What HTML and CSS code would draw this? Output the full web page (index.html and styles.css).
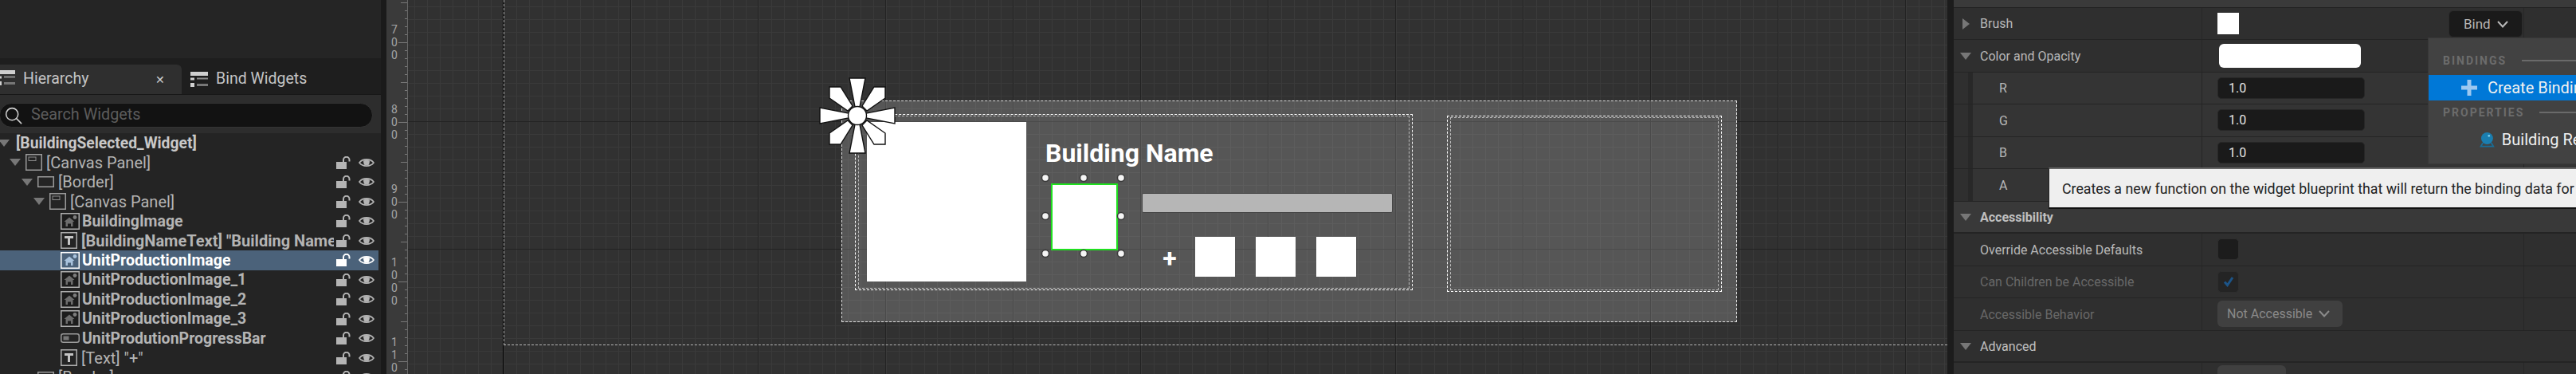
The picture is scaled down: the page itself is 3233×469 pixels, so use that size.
FILE: index.html
```html
<!DOCTYPE html>
<html lang="en">

<head>
    <meta charset="UTF-8">
    <title>BuildingSelected_Widget</title>
    <link rel="stylesheet" href="styles.css">
</head>

<body>
    <svg class="defs" width="0" height="0">
        <symbol id="lock" viewBox="0 0 18 16">
            <rect x="0" y="7" width="13" height="9" fill="currentColor"/>
            <path d="M9 7V4.5a3.7 3.7 0 0 1 7.5 0V6.5" fill="none" stroke="currentColor" stroke-width="2"/>
        </symbol>
        <symbol id="eye" viewBox="0 0 20 14">
            <path d="M1 7C5 1.5 15 1.5 19 7C15 12.5 5 12.5 1 7Z" fill="none" stroke="currentColor" stroke-width="1.6"/>
            <path d="M5.5 4.6C8 2.8 13 2.8 14.5 5A4.6 4.6 0 0 1 5.5 4.6Z" fill="currentColor" opacity=".75"/>
            <circle cx="10" cy="7" r="3.6" fill="currentColor"/>
        </symbol>
        <symbol id="image" viewBox="0 0 24 21">
            <rect x=".75" y=".75" width="22.5" height="19.5" fill="#1c1c1c" stroke="#adadad" stroke-width="1.5"/>
            <circle cx="18" cy="5.5" r="2.4" fill="#7d7d7d"/>
            <path d="M4.5 11L11 5.5L17.5 11H15.5V17H13V13.5H9V17H6.5V11Z" fill="#6d6d6d"/>
        </symbol>
        <symbol id="image-sel" viewBox="0 0 24 21">
            <rect x=".75" y=".75" width="22.5" height="19.5" fill="#4b627a" stroke="#fff" stroke-width="1.5"/>
            <circle cx="18" cy="5.5" r="2.4" fill="#a9c3dd"/>
            <path d="M4.5 11L11 5.5L17.5 11H15.5V17H13V13.5H9V17H6.5V11Z" fill="#a9c3dd"/>
        </symbol>
        <symbol id="text" viewBox="0 0 21 21">
            <rect x=".75" y=".75" width="19.5" height="19.5" fill="none" stroke="#adadad" stroke-width="1.5"/>
            <path d="M5 5H16V8H12V16H9V8H5Z" fill="#c4c4c4"/>
        </symbol>
        <symbol id="panel" viewBox="0 0 21 21">
            <rect x=".75" y=".75" width="19.5" height="19.5" fill="none" stroke="#9a9a9a" stroke-width="1.5"/>
            <rect x="4" y="4" width="9" height="4.5" fill="none" stroke="#8a8a8a"/>
        </symbol>
        <symbol id="border" viewBox="0 0 21 14">
            <rect x=".75" y=".75" width="19.5" height="12.5" fill="none" stroke="#9a9a9a" stroke-width="1.5"/>
        </symbol>
        <symbol id="bar" viewBox="0 0 24 12">
            <rect x=".75" y=".75" width="22.5" height="10.5" rx="2.5" fill="none" stroke="#9a9a9a" stroke-width="1.5"/>
            <rect x="3.5" y="3.5" width="7" height="5" fill="#777"/>
        </symbol>
        <symbol id="list" viewBox="0 0 22 19">
            <rect x="0" y="0" width="22" height="5" fill="#d0d0d0"/>
            <rect x="0" y="7.5" width="5" height="3" fill="#d0d0d0"/>
            <rect x="8" y="7.5" width="14" height="2" fill="#8c8c8c"/>
            <rect x="0" y="14" width="5" height="5" fill="#d0d0d0"/>
            <rect x="8" y="15" width="14" height="3" fill="#777"/>
        </symbol>
        <symbol id="chevron" viewBox="0 0 14 9">
            <path d="M1 1L7 7.5L13 1" fill="none" stroke="currentColor" stroke-width="2"/>
        </symbol>
    </svg>

    <div class="editor">
        <div class="left-panel">
            <div class="left-top"></div>
            <div class="tabs">
                <div class="tab tab-active">
                    <svg class="tab-icon tab-icon-cut"><use href="#list"/></svg>
                    <span class="tab-label">Hierarchy</span>
                    <span class="tab-close">&#10005;</span>
                </div>
                <div class="tab tab-idle">
                    <svg class="tab-icon"><use href="#list"/></svg>
                    <span class="tab-label">Bind Widgets</span>
                </div>
            </div>
            <div class="search-row">
                <div class="search-box">
                    <svg class="search-icon" viewBox="0 0 24 24">
                        <circle cx="10" cy="10" r="8.2" fill="none" stroke="#cfcfcf" stroke-width="1.7"/>
                        <path d="M16 16L23 23" stroke="#cfcfcf" stroke-width="1.7"/>
                    </svg>
                    <span class="search-text">Search Widgets</span>
                </div>
            </div>
            <div class="tree">
                <div class="tree-row level-0">
                    <i class="arrow-down"></i>
                    <span class="tree-label bold root-label">[BuildingSelected_Widget]</span>
                </div>
                <div class="tree-row level-1">
                    <i class="arrow-down"></i>
                    <svg class="tree-icon icon-square"><use href="#panel"/></svg>
                    <span class="tree-label">[Canvas Panel]</span>
                    <svg class="lock"><use href="#lock"/></svg>
                    <svg class="eye"><use href="#eye"/></svg>
                </div>
                <div class="tree-row level-2">
                    <i class="arrow-down"></i>
                    <svg class="tree-icon icon-flat"><use href="#border"/></svg>
                    <span class="tree-label">[Border]</span>
                    <svg class="lock"><use href="#lock"/></svg>
                    <svg class="eye"><use href="#eye"/></svg>
                </div>
                <div class="tree-row level-3">
                    <i class="arrow-down"></i>
                    <svg class="tree-icon icon-square"><use href="#panel"/></svg>
                    <span class="tree-label">[Canvas Panel]</span>
                    <svg class="lock"><use href="#lock"/></svg>
                    <svg class="eye"><use href="#eye"/></svg>
                </div>
                <div class="tree-row level-4">
                    <svg class="tree-icon icon-wide"><use href="#image"/></svg>
                    <span class="tree-label bold">BuildingImage</span>
                    <svg class="lock"><use href="#lock"/></svg>
                    <svg class="eye"><use href="#eye"/></svg>
                </div>
                <div class="tree-row level-4">
                    <svg class="tree-icon icon-square"><use href="#text"/></svg>
                    <span class="tree-label bold name-label">[BuildingNameText] "Building Name"</span>
                    <svg class="lock"><use href="#lock"/></svg>
                    <svg class="eye"><use href="#eye"/></svg>
                </div>
                <div class="tree-row level-4 selected">
                    <svg class="tree-icon icon-wide"><use href="#image-sel"/></svg>
                    <span class="tree-label bold">UnitProductionImage</span>
                    <svg class="lock"><use href="#lock"/></svg>
                    <svg class="eye"><use href="#eye"/></svg>
                </div>
                <div class="tree-row level-4">
                    <svg class="tree-icon icon-wide"><use href="#image"/></svg>
                    <span class="tree-label bold">UnitProductionImage_1</span>
                    <svg class="lock"><use href="#lock"/></svg>
                    <svg class="eye"><use href="#eye"/></svg>
                </div>
                <div class="tree-row level-4">
                    <svg class="tree-icon icon-wide"><use href="#image"/></svg>
                    <span class="tree-label bold">UnitProductionImage_2</span>
                    <svg class="lock"><use href="#lock"/></svg>
                    <svg class="eye"><use href="#eye"/></svg>
                </div>
                <div class="tree-row level-4">
                    <svg class="tree-icon icon-wide"><use href="#image"/></svg>
                    <span class="tree-label bold">UnitProductionImage_3</span>
                    <svg class="lock"><use href="#lock"/></svg>
                    <svg class="eye"><use href="#eye"/></svg>
                </div>
                <div class="tree-row level-4">
                    <svg class="tree-icon icon-bar"><use href="#bar"/></svg>
                    <span class="tree-label bold">UnitProdutionProgressBar</span>
                    <svg class="lock"><use href="#lock"/></svg>
                    <svg class="eye"><use href="#eye"/></svg>
                </div>
                <div class="tree-row level-4">
                    <svg class="tree-icon icon-square"><use href="#text"/></svg>
                    <span class="tree-label">[Text] "+"</span>
                    <svg class="lock"><use href="#lock"/></svg>
                    <svg class="eye"><use href="#eye"/></svg>
                </div>
                <div class="tree-row level-2">
                    <i class="arrow-down"></i>
                    <svg class="tree-icon icon-flat"><use href="#border"/></svg>
                    <span class="tree-label">[Border]</span>
                    <svg class="lock"><use href="#lock"/></svg>
                    <svg class="eye"><use href="#eye"/></svg>
                </div>
            </div>
        </div>

        <div class="gutter-left"></div>

        <div class="ruler">
            <div class="ruler-seg"><span>700</span></div>
            <div class="ruler-seg"><span>800</span></div>
            <div class="ruler-seg"><span>900</span></div>
            <div class="ruler-seg"><span>1000</span></div>
            <div class="ruler-seg"><span>1100</span></div>
        </div>

        <div class="canvas">
            <div class="axis-line"></div>
            <div class="screen-bounds"></div>

            <div class="widget">
                <div class="slot slot-main"><div class="slot-inner"></div></div>
                <div class="slot slot-side"><div class="slot-inner"></div></div>
                <div class="building-image"></div>
                <div class="building-name">Building Name</div>
                <div class="unit-selected"></div>
                <svg class="handles" viewBox="0 0 110 110">
                    <circle cx="7" cy="7" r="4.5"/><circle cx="55" cy="7" r="4.5"/><circle cx="102" cy="7" r="4.5"/>
                    <circle cx="7" cy="55" r="4.5"/><circle cx="102" cy="55" r="4.5"/>
                    <circle cx="7" cy="102" r="4.5"/><circle cx="55" cy="102" r="4.5"/><circle cx="102" cy="102" r="4.5"/>
                </svg>
                <div class="progress"></div>
                <div class="plus">+</div>
                <div class="queue">
                    <div class="queue-item"></div>
                    <div class="queue-item"></div>
                    <div class="queue-item"></div>
                </div>
            </div>

            <svg class="anchor" viewBox="-50 -50 100 100">
                <g fill="#fff" stroke="#111" stroke-width="1.4" stroke-linejoin="miter">
                    <path d="M-10 -47H10L3 -11H-3Z"/>
                    <path d="M-10 47H10L3 11H-3Z"/>
                    <path d="M-47 -10V10L-11 3V-3Z"/>
                    <path d="M47 -10V10L11 3V-3Z"/>
                    <path d="M-35 -36H-21L-6 -12L-12 -6L-35 -22Z"/>
                    <path d="M35 -36H21L6 -12L12 -6L35 -22Z"/>
                    <path d="M-35 36H-21L-6 12L-12 6L-35 22Z"/>
                    <path d="M35 36H21L6 12L12 6L35 22Z"/>
                    <circle cx="0" cy="0" r="11.5"/>
                </g>
            </svg>
        </div>

        <div class="gutter-right"></div>

        <div class="details">
            <div class="details-top"></div>

            <div class="prop">
                <div class="prop-name"><i class="arrow-right"></i><span>Brush</span></div>
                <div class="prop-value"><div class="swatch"></div></div>
                <div class="prop-extra"></div>
            </div>
            <div class="prop">
                <div class="prop-name"><i class="arrow-down"></i><span>Color and Opacity</span></div>
                <div class="prop-value"><div class="color-bar"></div></div>
                <div class="prop-extra"></div>
            </div>
            <div class="prop prop-sub">
                <div class="prop-name"><span>R</span></div>
                <div class="prop-value"><div class="num-input">1.0</div></div>
                <div class="prop-extra"></div>
            </div>
            <div class="prop prop-sub">
                <div class="prop-name"><span>G</span></div>
                <div class="prop-value"><div class="num-input">1.0</div></div>
                <div class="prop-extra"></div>
            </div>
            <div class="prop prop-sub">
                <div class="prop-name"><span>B</span></div>
                <div class="prop-value"><div class="num-input">1.0</div></div>
                <div class="prop-extra"></div>
            </div>
            <div class="prop prop-sub">
                <div class="prop-name"><span>A</span></div>
                <div class="prop-value"></div>
                <div class="prop-extra"></div>
            </div>

            <div class="section section-main"><i class="arrow-down"></i><span>Accessibility</span></div>
            <div class="prop">
                <div class="prop-name"><span>Override Accessible Defaults</span></div>
                <div class="prop-value"><div class="check"></div></div>
                <div class="prop-extra"></div>
            </div>
            <div class="prop dim">
                <div class="prop-name"><span>Can Children be Accessible</span></div>
                <div class="prop-value">
                    <div class="check check-on">
                        <svg viewBox="0 0 14 14"><path d="M2 7.5L5.5 11.5L12 2" fill="none" stroke="#1c5488" stroke-width="3"/></svg>
                    </div>
                </div>
                <div class="prop-extra"></div>
            </div>
            <div class="prop dim">
                <div class="prop-name"><span>Accessible Behavior</span></div>
                <div class="prop-value">
                    <div class="combo"><span>Not Accessible</span><svg class="chev-small"><use href="#chevron"/></svg></div>
                </div>
                <div class="prop-extra"></div>
            </div>
            <div class="section"><i class="arrow-down"></i><span>Advanced</span></div>
            <div class="prop dim">
                <div class="prop-name"><span>Accessible Summary Behavior</span></div>
                <div class="prop-value"><div class="combo combo-short"></div></div>
                <div class="prop-extra"></div>
            </div>

            <div class="bind-btn"><span>Bind</span><svg class="chev-bind"><use href="#chevron"/></svg></div>

            <div class="bind-menu">
                <div class="menu-heading"><span>BINDINGS</span><i></i></div>
                <div class="menu-item menu-active">
                    <svg class="menu-plus" viewBox="0 0 20 20"><path d="M7.5 0H12.5V7.5H20V12.5H12.5V20H7.5V12.5H0V7.5H7.5Z" fill="#9cc8f0"/></svg>
                    <span>Create Binding</span>
                </div>
                <div class="menu-heading"><span>PROPERTIES</span><i></i></div>
                <div class="menu-item menu-prop">
                    <svg class="menu-ref" viewBox="0 0 24 24">
                        <path d="M0 24L4 17H6.5L4 22H20L17.500 17H20L24 24Z" fill="#1a6d96"/>
                        <circle cx="12" cy="10" r="9.500" fill="#1a7eb0"/>
                        <circle cx="15" cy="6" r="1.700" fill="#7fd0f0"/>
                    </svg>
                    <span>Building Reference</span>
                </div>
            </div>

            <div class="tooltip">Creates a new function on the widget blueprint that will return the binding data for this property.</div>
        </div>
    </div>
</body>

</html>
```

FILE: styles.css
```css
html, body {
    margin: 0;
    height: 100%;
    overflow: hidden;
    background-color: #1a1a1a;
    font-family: Roboto, "Liberation Sans", sans-serif;
}

.defs {
    position: absolute;
}

.editor {
    display: flex;
    width: 3233px;
    height: 469px;
    overflow: hidden;
}

/* left panel */
.left-panel {
    width: 478px;
    flex: none;
    display: flex;
    flex-direction: column;
    background-color: #242424;
}

.left-top {
    height: 73px;
    background-color: #252525;
}

.tabs {
    display: flex;
    height: 46px;
    padding-top: 8px;
    box-sizing: border-box;
    background-color: #1e1e1e;
    border-bottom: 1px solid #181818;
}

.tab {
    display: flex;
    align-items: center;
    font-size: 19.5px;
    color: #c4c4c4;
}

.tab-label {
    margin-top: -2px;
}

.tab-active {
    width: 228px;
    box-sizing: border-box;
    padding-left: 29px;
    position: relative;
    background-color: #2f2f2f;
    border-top-right-radius: 6px;
}

.tab-idle {
    padding-left: 11px;
}

.tab-icon {
    width: 22px;
    height: 19px;
    margin-right: 10px;
}

.tab-icon-cut {
    position: absolute;
    left: -3px;
    top: 7px;
    margin: 0;
}

.tab-close {
    position: absolute;
    left: 195px;
    font-size: 14px;
    color: #d0d0d0;
}

.search-row {
    height: 48px;
    box-sizing: border-box;
    padding: 10px 10px 7px 0;
    background-color: #2d2d2d;
}

.search-box {
    display: flex;
    align-items: center;
    height: 31px;
    box-sizing: border-box;
    margin-left: -1px;
    padding-left: 6px;
    background-color: #121212;
    border: 1px solid #333;
    border-radius: 16px;
    font-size: 19.8px;
    color: #5c5c5c;
}

.search-text {
    margin-top: -3px;
}

.search-icon {
    width: 22px;
    height: 22px;
    margin-right: 11px;
}

.tree {
    flex: 1;
    margin-right: 3px;
    overflow: hidden;
    background-color: #242424;
}

.tree-row {
    display: flex;
    align-items: center;
    height: 24.5px;
    font-size: 20px;
    color: #b4b4b4;
    padding-right: 5px;
}

.level-1 { padding-left: 12px; }
.level-2 { padding-left: 27px; }
.level-3 { padding-left: 42px; }
.level-4 { padding-left: 76px; }

.tree-row > .arrow-down {
    margin: 0 6px 0 0;
}

.tree-row.level-0 > .arrow-down {
    margin-left: -2px;
    margin-right: 8px;
}

.tree-icon {
    flex: none;
    margin-right: 5px;
}

.icon-square { width: 21px; height: 21px; }
.icon-flat { width: 21px; height: 14px; }
.icon-wide { width: 24px; height: 21px; margin-right: 3px; }
.icon-bar { width: 24px; height: 12px; margin-right: 3px; }

.tree-label {
    flex: 1;
    overflow: hidden;
    white-space: nowrap;
    margin-right: 3px;
}

.bold {
    font-size: 19.5px;
    font-weight: 700;
}

.root-label {
    font-size: 19.3px;
    color: #c8c8c8;
}

.name-label {
    font-size: 20px;
}

.lock {
    flex: none;
    width: 18px;
    height: 16px;
    margin-right: 10px;
    color: #b4b4b4;
}

.eye {
    flex: none;
    width: 20px;
    height: 14px;
    color: #b4b4b4;
}

.selected {
    background-color: #4b627a;
    color: #fff;
}

.selected .lock,
.selected .eye {
    color: #fff;
}

/* arrows */
.arrow-down {
    flex: none;
    width: 0;
    height: 0;
    border-left: 7px solid transparent;
    border-right: 7px solid transparent;
    border-top: 9px solid #777;
}

.arrow-right {
    flex: none;
    width: 0;
    height: 0;
    border-top: 7px solid transparent;
    border-bottom: 7px solid transparent;
    border-left: 9px solid #777;
}

.gutter-left {
    width: 7px;
    flex: none;
    background-color: #1a1a1a;
}

/* ruler */
.ruler {
    width: 27px;
    flex: none;
    box-sizing: border-box;
    padding-top: 3px;
    overflow: hidden;
    border-right: 1px solid #666;
    background-color: #3a3a3a;
    background-image:
        linear-gradient(#787878 1px, transparent 1px),
        linear-gradient(#787878 1px, transparent 1px),
        linear-gradient(#787878 1px, transparent 1px);
    background-repeat: repeat-y;
    background-position: right 0 top 53px, right 0 top 3px, right 0 top 3px;
    background-size: 11px 100px, 8px 100px, 3px 10px;
}

.ruler-seg {
    height: 100px;
    display: flex;
    align-items: center;
    padding-left: 5px;
}

.ruler-seg span {
    width: 10px;
    word-break: break-all;
    text-align: center;
    font-size: 14px;
    line-height: 16px;
    color: #a6a6a6;
}

/* designer canvas */
.canvas {
    flex: 1;
    position: relative;
    overflow: hidden;
    background-color: #313131;
    background-image:
        linear-gradient(to right, #232323 1px, transparent 1px),
        linear-gradient(to bottom, #232323 1px, transparent 1px),
        linear-gradient(to right, #3a3a3a 1px, transparent 1px),
        linear-gradient(to bottom, #3a3a3a 1px, transparent 1px);
    background-size: 160px 100%, 100% 160px, 16px 100%, 100% 16px;
    background-position: 119px 0, 0 152px, 8px 0, 0 8px;
}

.axis-line {
    position: absolute;
    left: 119px;
    top: 0;
    bottom: 0;
    width: 1px;
    background-color: #000;
}

.screen-bounds {
    position: absolute;
    left: 120px;
    top: -5px;
    right: 0;
    height: 437px;
    border-left: 1px dashed #b5b5b5;
    border-bottom: 1px dashed #b5b5b5;
}

.widget {
    position: absolute;
    left: 544px;
    top: 126px;
    width: 1122px;
    height: 276px;
    border: 1px dashed #dcdcdc;
    background-color: rgba(255, 255, 255, 0.18);
}

.slot {
    position: absolute;
    box-sizing: border-box;
    height: 221px;
    border: 1px dashed #fff;
    padding: 1px 3px;
}

.slot-main {
    left: 16px;
    top: 16px;
    width: 700px;
}

.slot-side {
    left: 759px;
    top: 18px;
    width: 345px;
}

.slot-inner {
    height: 100%;
    box-sizing: border-box;
    border: 1px dashed #333;
    outline: 1px dashed #bbb;
    outline-offset: -1px;
}

.building-image {
    position: absolute;
    left: 31px;
    top: 26px;
    width: 200px;
    height: 200px;
    background-color: #fff;
}

.building-name {
    position: absolute;
    left: 255px;
    top: 45px;
    font-size: 32px;
    line-height: 40px;
    font-weight: 700;
    color: #fff;
    white-space: nowrap;
}

.unit-selected {
    position: absolute;
    left: 262px;
    top: 103px;
    width: 84px;
    height: 84px;
    box-sizing: border-box;
    border: 2px solid #1fe01f;
    background-color: #fff;
}

.handles {
    position: absolute;
    left: 248px;
    top: 89px;
    width: 110px;
    height: 110px;
}

.handles circle {
    fill: #f4f4f4;
    stroke: #3a3a3a;
    stroke-width: 1.5;
}

.progress {
    position: absolute;
    left: 376px;
    top: 115px;
    width: 315px;
    height: 25px;
    box-sizing: border-box;
    border: 1px solid #444;
    border-radius: 2px;
    background-color: #b6b6b6;
}

.plus {
    position: absolute;
    left: 400px;
    top: 177px;
    width: 22px;
    text-align: center;
    font-size: 32px;
    line-height: 40px;
    font-weight: 700;
    color: #fff;
}

.queue {
    position: absolute;
    left: 443px;
    top: 170px;
    display: flex;
    gap: 26px;
}

.queue-item {
    width: 50px;
    height: 50px;
    background-color: #fff;
}

.anchor {
    position: absolute;
    left: 514px;
    top: 95px;
    width: 100px;
    height: 100px;
}

.gutter-right {
    width: 8px;
    flex: none;
    background-color: #1c1c1c;
}

/* details panel */
.details {
    width: 781px;
    flex: none;
    position: relative;
    background-color: #2f2f2f;
    font-size: 16px;
    color: #b8b8b8;
}

.details-top {
    height: 9.5px;
    box-sizing: border-box;
    background-color: #3a3a3a;
    border-bottom: 1px solid #222;
}

.prop {
    display: flex;
    height: 40.5px;
    box-sizing: border-box;
    border-bottom: 1px solid #242424;
}

.prop-name {
    width: 312px;
    flex: none;
    box-sizing: border-box;
    display: flex;
    align-items: center;
    padding-left: 33px;
    padding-top: 1px;
    position: relative;
    border-right: 1px solid #262626;
}

.prop-name > i {
    position: absolute;
    left: 8px;
}

.prop-name > .arrow-right {
    left: 11px;
}

.prop-value {
    width: 404px;
    flex: none;
    box-sizing: border-box;
    display: flex;
    align-items: center;
    padding-left: 19px;
    border-right: 1px solid #262626;
}

.prop-extra {
    flex: 1;
}

.prop-sub {
    background-color: #343434;
    background-image: linear-gradient(to right, #2f2f2f 18px, #282828 18px, #282828 24px, transparent 24px);
}

.prop-sub .prop-name {
    padding-left: 57px;
}

.dim {
    color: #686868;
}

.swatch {
    width: 27px;
    height: 27px;
    background-color: #fff;
}

.color-bar {
    width: 178px;
    height: 30px;
    margin-left: 2px;
    border-radius: 6px;
    background-color: #fff;
}

.num-input {
    width: 185px;
    height: 27px;
    box-sizing: border-box;
    display: flex;
    align-items: center;
    padding-left: 13px;
    background-color: #1a1a1a;
    border: 1px solid #272727;
    border-radius: 5px;
    color: #e4e4e4;
}

.section {
    display: flex;
    align-items: center;
    height: 40.5px;
    box-sizing: border-box;
    padding-left: 8px;
    padding-top: 1px;
    background-color: #2f2f2f;
    border-bottom: 2px solid #242424;
    color: #c0c0c0;
}

.section span {
    margin-left: 11px;
}

.section-main {
    background-color: #393939;
    font-weight: 700;
}

.check {
    width: 27px;
    height: 27px;
    box-sizing: border-box;
    display: flex;
    align-items: center;
    justify-content: center;
    background-color: #1c1c1c;
    border: 1px solid #2e2e2e;
    border-radius: 5px;
}

.check-on {
    background-color: #242424;
}

.check svg {
    width: 14px;
    height: 14px;
}

.combo {
    display: flex;
    align-items: center;
    height: 33px;
    width: 157px;
    box-sizing: border-box;
    padding-left: 12px;
    border-radius: 6px;
    background-color: #404040;
    color: #8a8a8a;
}

.combo-short {
    width: 86px;
}

.chev-small {
    width: 14px;
    height: 9px;
    margin-left: 8px;
}

.bind-btn {
    position: absolute;
    left: 621px;
    top: 13px;
    width: 93px;
    height: 34px;
    box-sizing: border-box;
    display: flex;
    align-items: center;
    padding-left: 18px;
    background-color: #1a1a1a;
    border: 1px solid #2b2b2b;
    border-radius: 6px;
    font-size: 17px;
    color: #b8b8b8;
}

.chev-bind {
    width: 14px;
    height: 9px;
    margin-left: 8px;
}

.bind-menu {
    position: absolute;
    left: 595px;
    top: 47px;
    width: 260px;
    height: 159px;
    box-sizing: border-box;
    padding-top: 13px;
    background-color: #424242;
    border: 1px solid #383838;
}

.menu-heading {
    display: flex;
    align-items: center;
    height: 33px;
    box-sizing: border-box;
    padding: 0 0 3px 18px;
    font-size: 14px;
    font-weight: 700;
    letter-spacing: 2px;
    color: #6c6c6c;
}

.menu-heading i {
    flex: 1;
    height: 2px;
    margin-left: 19px;
    background-color: #6a6a6a;
}

.menu-item {
    display: flex;
    align-items: center;
    height: 32px;
    font-size: 20px;
    white-space: nowrap;
    color: #f0f0f0;
}

.menu-active {
    padding-left: 41px;
    background-color: #0078d7;
}

.menu-plus {
    width: 20px;
    height: 20px;
    margin-right: 13px;
}

.menu-prop {
    padding-left: 64px;
}

.menu-ref {
    width: 24px;
    height: 24px;
    margin-right: 9px;
}

.tooltip {
    position: absolute;
    left: 119px;
    top: 210px;
    width: 800px;
    height: 52px;
    box-sizing: border-box;
    padding: 14px 16px;
    background-color: #efefef;
    border-top: 2px solid #666;
    border-bottom: 2px solid #111;
    border-left: 1px solid #222;
    font-size: 17.8px;
    line-height: 22px;
    color: #222;
    white-space: nowrap;
}
```
